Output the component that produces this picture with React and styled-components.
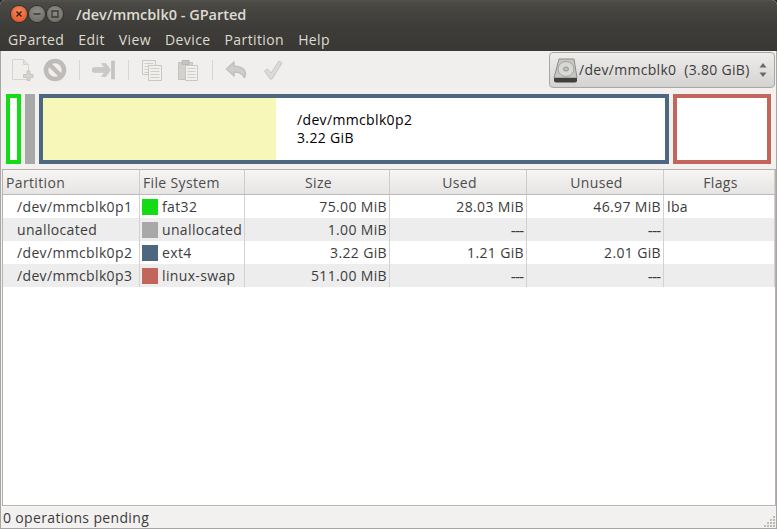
import React from "react";
import styled, { createGlobalStyle } from "styled-components";

const Global = createGlobalStyle`
  html, body { margin: 0; padding: 0; background: #262624; }
  body { font-family: "Open Sans", "Noto Sans", "Liberation Sans", sans-serif; font-size: 14px; }
`;
const Win = styled.div`
  width: 777px; height: 529px; display: flex; flex-direction: column; overflow: hidden;
  background: #f2f1f0; border-radius: 5px 5px 0 0;
`;
const TitleBar = styled.div`
  height: 27px; flex: none; display: flex; align-items: center; padding: 1px 0 0 11px; box-sizing: border-box;
  background: linear-gradient(#53514c 0, #4a4944 3px, #3d3c38 100%);
`;
const Controls = styled.div`display: flex; gap: 2px; width: 65px; flex: none;`;
const Ctl = styled.div`
  width: 16px; height: 16px; border-radius: 50%; display: flex; align-items: center; justify-content: center;
  background: ${p => p.$close ? "radial-gradient(circle at 50% 35%, #f58a5c, #dd4c1e)" : "radial-gradient(circle at 50% 35%, #8e8c84, #6a6860)"};
  box-shadow: 0 0 0 1px #33322e;
`;
const Title = styled.div`
  color: #dfdbd2; font-size: 14.5px; font-weight: 600;
`;
const MenuBar = styled.div`
  height: 24px; flex: none; display: flex; align-items: center; padding-left: 8px; gap: 14px;
  background: linear-gradient(#3d3c38, #393834); color: #dfdbd2; font-size: 14px; letter-spacing: 0.4px;
`;
const Body = styled.div`
  flex: 1; min-height: 0; display: flex; flex-direction: column; letter-spacing: 0.35px;
  border: 1px solid #a8a6a3; border-top: none;
`;
const Toolbar = styled.div`
  height: 37px; flex: none; display: flex; align-items: center;
  background: #f0efee; padding-left: 9px;
`;
const Tool = styled.svg`display: block; flex: none; width: 24px; height: 24px; margin-right: ${p => p.$mr || 0}px;`;
const Sep = styled.div`width: 1px; height: 20px; background: #d8d6d3; flex: none; margin-right: ${p => p.$mr}px;`;
const Combo = styled.div`
  margin-left: auto; margin-right: 1px; width: 226px; height: 36px; box-sizing: border-box;
  border: 1px solid #a9a7a3; border-radius: 4px; display: flex; align-items: center; padding-left: 3px;
  background: linear-gradient(#eeedec, #d4d3d1); color: #3c3c3c; font-size: 14px; letter-spacing: 0.3px;
`;
const ComboText = styled.span`margin-left: 1px; white-space: pre; flex: 1;`;
const Stepper = styled.svg`flex: none; margin-right: 6px;`;
const BarRow = styled.div`
  height: 70px; margin-top: 6px; flex: none; display: flex; padding-left: 5px;
`;
const Part = styled.div`
  box-sizing: border-box; height: 70px; flex: none; width: ${p => p.$w}px; margin-right: ${p => p.$mr || 0}px;
  border: ${p => p.$solid ? "none" : `4px solid ${p.$c}`}; background: ${p => p.$solid ? p.$c : "#fff"};
  display: flex; align-items: stretch;
`;
const UsedFill = styled.div`width: 233px; background: #f7f7b9; flex: none;`;
const PartLabel = styled.div`
  margin-left: 21px; align-self: center; color: #000; font-size: 14px; line-height: 18px;
`;
const TableWrap = styled.div`
  margin: 5px 0 0 1px; flex: 1; display: flex; flex-direction: column; background: #fff;
  border: 1px solid #b5b3b0;
`;
const grid = "137px 105px 145px 137px 137px 1fr";
const Head = styled.div`
  display: grid; grid-template-columns: ${grid}; height: 24px; flex: none;
  border-bottom: 1px solid #bdbbb8; background: linear-gradient(#f6f5f4, #e6e5e3);
`;
const HeadCell = styled.div`
  display: flex; align-items: center; padding-left: 3px; color: #4c4c4c; font-size: 14px;
  justify-content: ${p => p.$center ? "center" : "flex-start"};
  border-right: 1px solid #cfcdca; box-sizing: border-box;
`;
const Row = styled.div`
  display: grid; grid-template-columns: ${grid}; height: 23px; background: ${p => p.$alt ? "#ededed" : "#fff"};
`;
const Cell = styled.div`
  display: flex; align-items: center; box-sizing: border-box; color: #3c3c3c; font-size: 14px; white-space: nowrap;
  padding: ${p => p.$right ? "0 2px 0 0" : `0 0 0 ${p.$pl ?? 3}px`};
  justify-content: ${p => p.$right ? "flex-end" : "flex-start"};
  border-right: 1px solid #d3d1ce;
`;
const Swatch = styled.span`width: 16px; height: 16px; background: ${p => p.$c}; flex: none; margin-right: 4px;`;
const Dash = styled.span`font-size: 16px; letter-spacing: -1.1px; margin-right: 1px;`;
const Status = styled.div`
  height: 22px; flex: none; display: flex; align-items: center; padding-left: 2px; color: #3c3c3c; font-size: 14px;
  background: #f2f1f0; box-shadow: inset 0 1px #f9f9f8;
`;
const Grip = styled.svg`flex: none; margin-left: auto; align-self: flex-end;`;

const S = { fill: "#f0efec", stroke: "#d6d4d0", strokeWidth: 1 };
const NewIcon = () => (
  <Tool viewBox="0 0 24 24" $mr={9}>
    <path d="M2.5 1.5h11l5 5v15h-16z" {...S} />
    <path d="M13.5 1.5v5h5" fill="#e2e0dc" stroke="#d6d4d0" />
    <path d="M13.5 16.5h3.5v-3.5h3v3.5h3v3h-3v3h-3v-3h-3.5z" fill="#d3d5cf" stroke="#c2c4be" />
  </Tool>
);
const DeleteIcon = () => (
  <Tool viewBox="0 0 24 24" $mr={12}>
    <circle cx="12" cy="12" r="9" fill="none" stroke="#bebbb8" strokeWidth="4.6" />
    <path d="M6 6l12 12" stroke="#bebbb8" strokeWidth="4.4" />
  </Tool>
);
const ResizeIcon = () => (
  <Tool viewBox="0 0 24 24" $mr={12}>
    <path d="M2.5 9.5h10l-3-4h4.5l4.5 6.5-4.5 6.5h-4.5l3-4h-10a2.5 2.5 0 0 1 0-5z" fill="#cbc9c5" stroke="#c0beba" strokeWidth="0.5" />
    <path d="M19.5 3h3v18h-3z" fill="#c6c4c0" stroke="#bbb9b5" strokeWidth="0.5" />
  </Tool>
);
const Page = ({ x, y, w = 12, h = 15 }) => (
  <g>
    <path d={`M${x + .5} ${y + .5}h${w}v${h}h-${w}z`} fill="#f0efec" stroke="#c9c7c3" />
    {[3, 6, 9, 12].map(d => <path key={d} d={`M${x + 2.5} ${y + d + .5}h${w - 4}`} stroke="#d0cecb" />)}
  </g>
);
const CopyIcon = () => (
  <Tool viewBox="0 0 24 24" $mr={12}>
    <g fill="none"><Page x={2} y={2} w={13} h={14} /><Page x={8} y={7} w={13} h={15} /></g>
  </Tool>
);
const PasteIcon = () => (
  <Tool viewBox="0 0 24 24" $mr={12}>
    <path d="M2.5 4.5h14v17h-14z" fill="#d3d1ce" stroke="#c4c2bf" />
    <path d="M6 2.5h7v4H6z" fill="#c6c4c1" stroke="#bbb9b6" />
    <Page x={9} y={7} w={12} h={15} />
  </Tool>
);
const UndoIcon = () => (
  <Tool viewBox="0 0 24 24" $mr={12}>
    <path d="M9 4 1.5 11 9 18v-4c5 0 8 1 10.5 5.5 3-6.5-1.5-11-10.5-11.5z" fill="#cfcdca" stroke="#c2c0bc" strokeWidth="1.6" strokeLinejoin="round" />
  </Tool>
);
const ApplyIcon = () => (
  <Tool viewBox="0 0 24 24">
    <path d="M3.5 13l3-2 3.5 4 8-12 3 2-10 16h-2z" fill="#dbdad6" stroke="#c9c7c3" strokeLinejoin="round" />
  </Tool>
);
const DiskIcon = () => (
  <svg width="25" height="28" viewBox="0 0 25 28" style={{ flex: "none" }}>
    <path d="M6 3h15l3 19H1z" fill="#c6c6c2" stroke="#8d8d89" strokeLinejoin="round" />
    <ellipse cx="13" cy="13" rx="8" ry="7.5" fill="#d8d8d4" stroke="#a3a39f" />
    <ellipse cx="13" cy="13" rx="2.5" ry="2" fill="#bfbfbb" stroke="#96968f" />
    <path d="M1 22h23v2.5a2 2 0 0 1-2 2H3a2 2 0 0 1-2-2z" fill="#3f3f3d" />
  </svg>
);

const rows = [
  ["/dev/mmcblk0p1", "#14dc14", "fat32", "75.00 MiB", "28.03 MiB", "46.97 MiB", "lba"],
  ["unallocated", "#a8a8a8", "unallocated", "1.00 MiB", "---", "---", ""],
  ["/dev/mmcblk0p2", "#4b6880", "ext4", "3.22 GiB", "1.21 GiB", "2.01 GiB", ""],
  ["/dev/mmcblk0p3", "#c2655a", "linux-swap", "511.00 MiB", "---", "---", ""],
];
const val = v => (v === "---" ? <Dash>---</Dash> : v);

export default function App() {
  return (
    <Win>
      <Global />
      <TitleBar>
        <Controls>
          <Ctl $close><svg width="8" height="8" viewBox="0 0 8 8"><path d="M1.5 1.5l5 5M6.5 1.5l-5 5" stroke="#4a1e0c" strokeWidth="1.5" /></svg></Ctl>
          <Ctl><svg width="8" height="8" viewBox="0 0 8 8"><path d="M0.5 4h7" stroke="#3a3934" strokeWidth="1.5" /></svg></Ctl>
          <Ctl><svg width="8" height="8" viewBox="0 0 8 8"><path d="M1 1h6v6H1z" fill="none" stroke="#3a3934" strokeWidth="1.3" /></svg></Ctl>
        </Controls>
        <Title>/dev/mmcblk0 - GParted</Title>
      </TitleBar>
      <MenuBar>
        {["GParted", "Edit", "View", "Device", "Partition", "Help"].map(m => <span key={m}>{m}</span>)}
      </MenuBar>
      <Body>
        <Toolbar>
          <NewIcon /><DeleteIcon /><Sep $mr={12} /><ResizeIcon /><Sep $mr={11} /><CopyIcon /><PasteIcon /><Sep $mr={12} /><UndoIcon /><ApplyIcon />
          <Combo>
            <DiskIcon />
            <ComboText>/dev/mmcblk0  (3.80 GiB)</ComboText>
            <Stepper width="10" height="18" viewBox="0 0 10 18"><path d="M5 2l3.5 4.5h-7zM5 16l3.5-4.5h-7z" fill="#6a6a68" /></Stepper>
          </Combo>
        </Toolbar>
        <BarRow>
          <Part $w={15} $c="#14dc14" $mr={4} />
          <Part $w={10} $c="#a8a8a8" $solid $mr={4} />
          <Part $w={630} $c="#4b6880" $mr={4}>
            <UsedFill />
            <PartLabel>/dev/mmcblk0p2<br />3.22 GiB</PartLabel>
          </Part>
          <Part $w={98} $c="#c2655a" />
        </BarRow>
        <TableWrap>
          <Head>
            <HeadCell>Partition</HeadCell>
            <HeadCell>File System</HeadCell>
            {["Size", "Used", "Unused", "Flags"].map(h => <HeadCell key={h} $center>{h}</HeadCell>)}
          </Head>
          {rows.map((r, i) => (
            <Row key={r[0]} $alt={i % 2 === 1}>
              <Cell $pl={14}>{r[0]}</Cell>
              <Cell $pl={2}><Swatch $c={r[1]} />{r[2]}</Cell>
              <Cell $right>{r[3]}</Cell>
              <Cell $right>{val(r[4])}</Cell>
              <Cell $right>{val(r[5])}</Cell>
              <Cell>{r[6]}</Cell>
            </Row>
          ))}
        </TableWrap>
        <Status>
          0 operations pending
          <Grip width="13" height="13" viewBox="0 0 13 13" fill="#bdbbb8">
            <rect x="10" y="1" width="2" height="2" /><rect x="7" y="4" width="2" height="2" /><rect x="10" y="4" width="2" height="2" />
            <rect x="4" y="7" width="2" height="2" /><rect x="7" y="7" width="2" height="2" /><rect x="10" y="7" width="2" height="2" />
            <rect x="1" y="10" width="2" height="2" /><rect x="4" y="10" width="2" height="2" /><rect x="7" y="10" width="2" height="2" /><rect x="10" y="10" width="2" height="2" />
          </Grip>
        </Status>
      </Body>
    </Win>
  );
}
